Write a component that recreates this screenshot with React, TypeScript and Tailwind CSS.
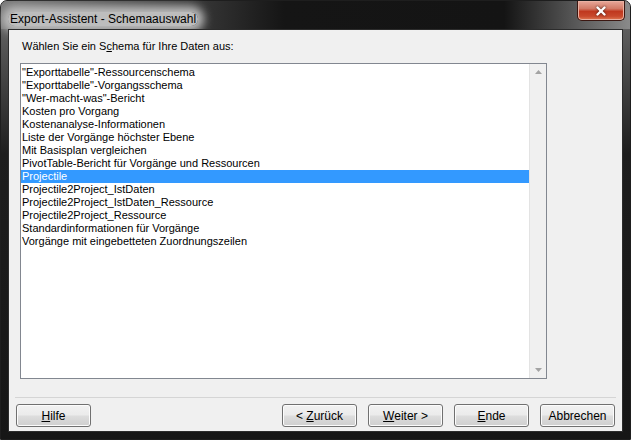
import { X } from 'lucide-react';

const schemas = [
  '"Exporttabelle"-Ressourcenschema',
  '"Exporttabelle"-Vorgangsschema',
  '"Wer-macht-was"-Bericht',
  'Kosten pro Vorgang',
  'Kostenanalyse-Informationen',
  'Liste der Vorgänge höchster Ebene',
  'Mit Basisplan vergleichen',
  'PivotTable-Bericht für Vorgänge und Ressourcen',
  'Projectile',
  'Projectile2Project_IstDaten',
  'Projectile2Project_IstDaten_Ressource',
  'Projectile2Project_Ressource',
  'Standardinformationen für Vorgänge',
  'Vorgänge mit eingebetteten Zuordnungszeilen',
];

const selected = 'Projectile';

function DialogButton({ children, className = '' }: { children: React.ReactNode; className?: string }) {
  return (
    <button
      className={`h-[23px] w-[75px] rounded-[3px] border border-[#707070] bg-[linear-gradient(to_bottom,#f2f2f2_0%,#ebebeb_48%,#dddddd_52%,#cfcfcf_100%)] text-[12px] text-black shadow-[inset_0_0_0_1px_#fcfcfc] ${className}`}
    >
      {children}
    </button>
  );
}

export default function App() {
  return (
    <div className="w-[631px] h-[440px] bg-white font-['Liberation_Sans',sans-serif]">
      <div className="flex h-full flex-col rounded-t-[7px] border border-[#1e1e1e] bg-[linear-gradient(to_bottom,#6e6e6e_0%,#4a4a4a_15%,#1e1e1e_35%,#161616_100%)]">
        {/* title bar */}
        <div className="flex h-[28px] items-start justify-between rounded-t-[6px] bg-[linear-gradient(to_right,#7a7a7a_0%,#3a3a3a_30%,#151515_45%,#141414_80%,#5c5c5c_92%,#8a8a8a_100%)]">
          <div className="pl-[7px] pt-[5px]">
            <span className="rounded-[8px] bg-[#bdbdbd] px-[2px] text-[12px] text-black shadow-[0_0_10px_6px_#bdbdbd]">
              Export-Assistent - Schemaauswahl
            </span>
          </div>
          <div className="mr-[5px] flex h-[20px] w-[48px] items-center justify-center rounded-b-[5px] border border-t-0 border-[#3b1711] bg-[linear-gradient(to_bottom,#e8a89a_0%,#d27a66_40%,#c0381f_55%,#c8482c_80%,#e07a55_100%)] shadow-[inset_0_0_0_1px_#eab1a2]">
            <X size={14} strokeWidth={4} className="text-white drop-shadow-[0_0_1px_#3a1a14]" />
          </div>
        </div>

        {/* client area */}
        <div className="mx-[7px] mb-[7px] flex flex-1 flex-col border border-[#2c2c2c] bg-[#f0f0f0]">
          <p className="ml-[13px] mt-[9px] text-[11px] leading-[15px] text-black">
            Wählen Sie ein S<span className="underline">c</span>hema für Ihre Daten aus:
          </p>

          <div className="ml-[11px] mt-[9px] flex h-[316px] w-[527px] border border-[#828790] bg-white">
            <ul className="flex-1 pt-[2px] text-[11px] leading-[13px] text-black">
              {schemas.map((s) => (
                <li
                  key={s}
                  className={`h-[13px] whitespace-nowrap pl-[1px] ${s === selected ? 'bg-[#3399ff] text-white' : ''}`}
                >
                  {s}
                </li>
              ))}
            </ul>
            {/* disabled vertical scrollbar */}
            <div className="flex w-[17px] flex-col items-center justify-between border-l border-[#e3e3e3] bg-[#f0f0f0] py-[6px]">
              <svg width="7" height="4" viewBox="0 0 7 4">
                <path d="M0 4 L3.5 0 L7 4 Z" fill="#a3a3a3" />
              </svg>
              <svg width="7" height="4" viewBox="0 0 7 4">
                <path d="M0 0 L3.5 4 L7 0 Z" fill="#a3a3a3" />
              </svg>
            </div>
          </div>

          <div className="mx-[6px] mt-[18px] h-[2px] border-t border-[#d5d5d5] border-b-white" />

          <div className="mx-[7px] mt-[5px] flex items-center">
            <DialogButton className="w-[73px]">
              <span className="underline">H</span>ilfe
            </DialogButton>
            <div className="ml-auto flex gap-[11px]">
              <DialogButton>
                &lt; <span className="underline">Z</span>urück
              </DialogButton>
              <DialogButton>
                <span className="underline">W</span>eiter &gt;
              </DialogButton>
              <DialogButton>
                <span className="underline">E</span>nde
              </DialogButton>
              <DialogButton>Abbrechen</DialogButton>
            </div>
          </div>
        </div>
      </div>
    </div>
  );
}
